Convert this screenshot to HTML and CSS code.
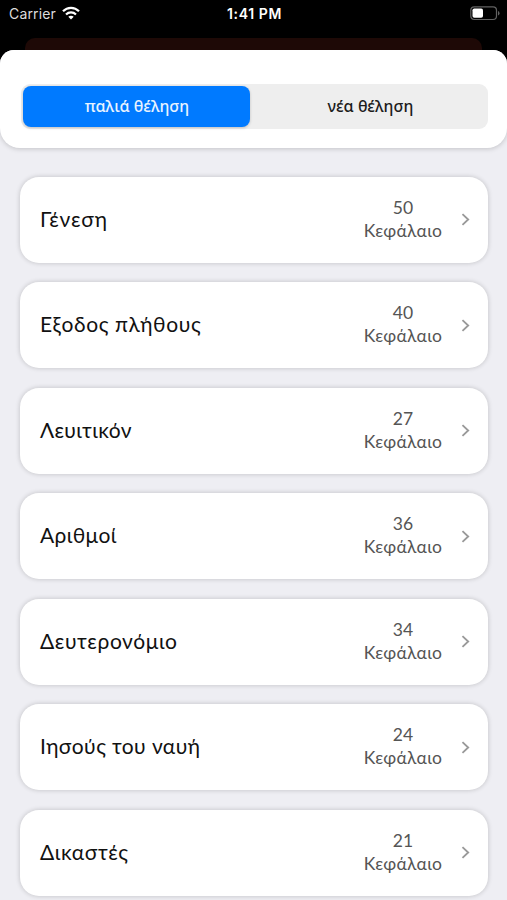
FILE: index.html
```html
<!DOCTYPE html>
<html lang="el">
<head>
<meta charset="utf-8">
<title>Βιβλία</title>
<link rel="stylesheet" href="styles.css">
</head>
<body>
<div class="status">
  <div class="carrier"><span>Carrier</span>
    <svg class="wifi" width="18" height="14" viewBox="0 0 18 14" fill="none" stroke="#fff" stroke-width="2.2"><path d="M1 5.3C5.5.6 12.500.6 17 5.300"/><path d="M4 8.500C6.800 5.700 11.200 5.700 14 8.500"/><path d="M9 13.500 6.300 10.800C7.800 9.400 10.200 9.400 11.700 10.800Z" fill="#fff" stroke="none"/></svg>
  </div>
  <div class="time">1:41 PM</div>
  <svg class="battery" width="30" height="15" viewBox="0 0 30 15"><rect x=".8" y=".8" width="25.700" height="12.700" rx="3.500" fill="none" stroke="#626262" stroke-width="1.200"/><rect x="2.500" y="2.500" width="10.500" height="9.300" rx="1.800" fill="#fff"/><path d="M28 5v4.500Q29.500 9 29.500 7.250T28 5Z" fill="#626262"/></svg>
</div>
<div class="behind"></div>
<main class="sheet">
  <header class="header">
    <div class="segments">
      <button class="segment active">παλιά θέληση</button>
      <button class="segment">νέα θέληση</button>
    </div>
  </header>
  <div class="list">
    <article class="card"><h2 class="name wide">Γένεση</h2><div class="count"><span>50</span><span class="unit">Κεφάλαιο</span></div><svg class="chevron" viewBox="0 0 8 12"><path d="M1.200 1 6.500 6 1.200 11"/></svg></article>
    <article class="card"><h2 class="name">Εξοδος πλήθους</h2><div class="count"><span>40</span><span class="unit">Κεφάλαιο</span></div><svg class="chevron" viewBox="0 0 8 12"><path d="M1.200 1 6.500 6 1.200 11"/></svg></article>
    <article class="card"><h2 class="name tight">Λευιτικόν</h2><div class="count"><span>27</span><span class="unit">Κεφάλαιο</span></div><svg class="chevron" viewBox="0 0 8 12"><path d="M1.200 1 6.500 6 1.200 11"/></svg></article>
    <article class="card"><h2 class="name tight">Αριθμοί</h2><div class="count"><span>36</span><span class="unit">Κεφάλαιο</span></div><svg class="chevron" viewBox="0 0 8 12"><path d="M1.200 1 6.500 6 1.200 11"/></svg></article>
    <article class="card"><h2 class="name">Δευτερονόμιο</h2><div class="count"><span>34</span><span class="unit">Κεφάλαιο</span></div><svg class="chevron" viewBox="0 0 8 12"><path d="M1.200 1 6.500 6 1.200 11"/></svg></article>
    <article class="card"><h2 class="name tight">Ιησούς του ναυή</h2><div class="count"><span>24</span><span class="unit">Κεφάλαιο</span></div><svg class="chevron" viewBox="0 0 8 12"><path d="M1.200 1 6.500 6 1.200 11"/></svg></article>
    <article class="card"><h2 class="name">Δικαστές</h2><div class="count"><span>21</span><span class="unit">Κεφάλαιο</span></div><svg class="chevron" viewBox="0 0 8 12"><path d="M1.200 1 6.500 6 1.200 11"/></svg></article>
  </div>
</main>
</body>
</html>
```

FILE: styles.css
```css
* { box-sizing: border-box; }
body { margin: 0; height: 900px; overflow: hidden; background: #000; font-family: Lato, "Open Sans", sans-serif; display: flex; flex-direction: column; }
.status { flex: none; height: 38px; padding: 0 7px 11px 9px; display: grid; grid-template-columns: 1fr auto 1fr; align-items: center; color: #fff; font-family: Inter, sans-serif; font-size: 14px; }
.carrier { display: flex; align-items: center; gap: 6px; color: #ddd; letter-spacing: .15px; }
.wifi { margin-top: -1px; }
.time { font-weight: 600; letter-spacing: .6px; }
.battery { justify-self: end; margin-top: -1px; }
.behind { flex: none; height: 12px; margin: 0 25px; background: #1e0906; border-radius: 10px 10px 0 0; }
.sheet { flex: none; height: 850px; overflow: hidden; background: #eeeef3; border-radius: 14px 14px 0 0; }
.header { height: 97.500px; padding: 34px 19px 0 21px; background: #fff; border-radius: 0 0 20px 20px; box-shadow: 0 1px 5px rgba(0,0,0,.18); }
.segments { height: 45px; padding: 2px; display: grid; grid-template-columns: 227px 1fr; background: #eee; border-radius: 9px; }
.segment { border: 0; padding: 0 0 1px 5px; margin: 0; background: none; font: 500 16px "Noto Sans", sans-serif; color: #1c1c1c; border-radius: 8px; }
.active { padding-left: 1px; background: #007aff; color: #e8f3ff; box-shadow: 0 1px 3px rgba(0,0,0,.2); }
.list { padding: 29px 19.500px 0 20px; display: flex; flex-direction: column; gap: 19.500px; }
.card { flex: none; height: 86px; padding: 0 17.500px 0 20px; display: flex; align-items: center; background: #fff; border-radius: 19px; box-shadow: 0 0 5px rgba(0,0,0,.2); }
.name { flex: 1; margin: 0; padding-bottom: 3px; font-size: 21px; font-weight: 400; letter-spacing: .6px; color: #111; }
.tight { letter-spacing: .4px; }
.wide { letter-spacing: .9px; }
.count { width: 80px; padding-bottom: 2px; display: flex; flex-direction: column; align-items: center; font-size: 17.500px; line-height: 23px; color: #555; }
.unit { letter-spacing: .25px; }
.chevron { width: 9px; height: 13px; margin-left: 18px; fill: none; stroke: #999; stroke-width: 1.700; }
```
